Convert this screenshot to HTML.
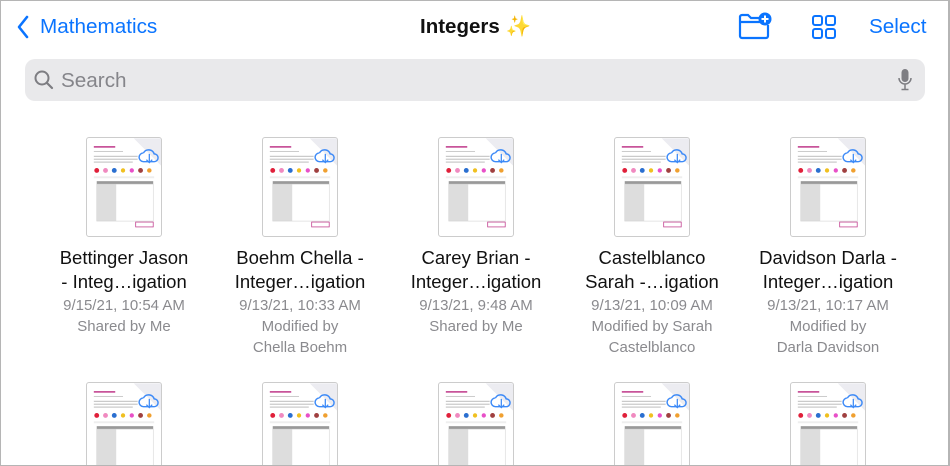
<!DOCTYPE html>
<html><head><meta charset="utf-8"><style>
*{margin:0;padding:0;box-sizing:border-box}
html,body{width:950px;height:466px;overflow:hidden}
body{background:#fff;font-family:"Liberation Sans",sans-serif;position:relative}
.frame{position:absolute;left:0;top:0;width:950px;height:466px;border:1px solid #b5b5b5;border-right-width:2px;pointer-events:none;z-index:5}
.blue{color:#0a74ff}
.abs{position:absolute}
.search{position:absolute;left:25px;top:59px;width:900px;height:42px;background:#e9e9eb;border-radius:10px}
.item{position:absolute;width:176px;text-align:center;white-space:nowrap}
.thumb{position:absolute;width:76px;height:100px;border:1px solid #ccc;border-radius:3px;background:#fff;overflow:hidden}
.t1{font-size:18.5px;line-height:24px;color:#111}
.t2{font-size:15px;line-height:21px;color:#8a8a8e}
</style></head><body>
<div class="frame"></div>
<svg class="abs" style="left:16px;top:15px" width="14" height="24" viewBox="0 0 14 24"><path d="M11 2 L3 12 L11 22" fill="none" stroke="#0a74ff" stroke-width="2.6" stroke-linecap="round" stroke-linejoin="round"/></svg>
<div class="abs blue" style="left:40px;top:15px;font-size:20.7px">Mathematics</div>
<div class="abs" style="left:420px;top:15px;font-size:20.5px;font-weight:bold;color:#111">Integers <span style="color:#f5c518">✨</span></div>
<svg class="abs" style="left:737px;top:12px" width="36" height="28" viewBox="0 0 36 28"><path d="M3 8 V24 a2 2 0 0 0 2 2 H29 a2 2 0 0 0 2 -2 V13 M3 10 V5 a2 2 0 0 1 2 -2 H11 L14 6 H22 M3 10 H24" fill="none" stroke="#0a74ff" stroke-width="2.2"/><circle cx="28" cy="7" r="6.5" fill="#0a74ff"/><path d="M28 3.5V10.5M24.5 7H31.5" stroke="#fff" stroke-width="2"/></svg>
<svg class="abs" style="left:811px;top:14px" width="26" height="26" viewBox="0 0 26 26"><g fill="none" stroke="#0a74ff" stroke-width="2"><rect x="2" y="2" width="9" height="9" rx="2"/><rect x="15" y="2" width="9" height="9" rx="2"/><rect x="2" y="15" width="9" height="9" rx="2"/><rect x="15" y="15" width="9" height="9" rx="2"/></g></svg>
<div class="abs blue" style="left:869px;top:15px;font-size:20.7px">Select</div>
<div class="search">
<svg class="abs" style="left:8px;top:10px" width="22" height="22" viewBox="0 0 22 22"><circle cx="9" cy="9" r="6.5" fill="none" stroke="#7d7d82" stroke-width="2"/><path d="M14 14 L19 19" stroke="#7d7d82" stroke-width="2.2" stroke-linecap="round"/></svg>
<div class="abs" style="left:36px;top:10px;font-size:20.7px;color:#85858a">Search</div>
<svg class="abs" style="left:872px;top:9px" width="16" height="24" viewBox="0 0 16 24"><rect x="4.5" y="1" width="7" height="13" rx="3.5" fill="#7d7d82"/><path d="M2 10 a6 6 0 0 0 12 0 M8 16 V21 M4.5 21.5 H11.5" fill="none" stroke="#7d7d82" stroke-width="1.5"/></svg>
</div>
<div id="g"></div>
<script>
var thumb='<svg width="74" height="98" viewBox="0 0 76 100"><path d="M48 0 L76 0 L76 28 Z" fill="#ececf1"/><path d="M58 15 a6 6 0 0 1 11 1 a4 4 0 0 1 0 8 H58 a4 4 0 0 1 0 -9" fill="none" stroke="#3d8af7" stroke-width="1.5"/><path d="M64 16 V25 M61 22 L64 25 L67 22" fill="none" stroke="#3d8af7" stroke-width="1.3"/><rect x="7" y="8" width="22" height="1.6" fill="#c2408f"/><rect x="7" y="13" width="30" height="0.8" fill="#bbb"/><rect x="7" y="18" width="45" height="0.8" fill="#aaa"/><rect x="7" y="21" width="45" height="0.8" fill="#aaa"/><rect x="7" y="24" width="40" height="0.8" fill="#aaa"/><circle cx="10" cy="33" r="2.5" fill="#e0203a"/><circle cx="19" cy="33" r="2.5" fill="#f08ac0"/><circle cx="28" cy="33" r="2.5" fill="#2a6fd0"/><circle cx="37" cy="33" r="2.2" fill="#f0c020"/><circle cx="46" cy="33" r="2.2" fill="#e850c8"/><circle cx="55" cy="33" r="2.5" fill="#a04040"/><circle cx="64" cy="33" r="2.3" fill="#f0a030"/><rect x="7" y="39" width="62" height="2" fill="#eee"/><rect x="10" y="44" width="58" height="3" fill="#999"/><rect x="10" y="47" width="20" height="38" fill="#ddd"/><rect x="10" y="47" width="58" height="38" fill="none" stroke="#ccc" stroke-width="0.5"/><rect x="50" y="86" width="18" height="5" fill="none" stroke="#c2408f" stroke-width="0.8"/></svg>';
var items=[["Bettinger Jason","- Integ…igation","9/15/21, 10:54 AM","Shared by Me",""],["Boehm Chella -","Integer…igation","9/13/21, 10:33 AM","Modified by","Chella Boehm"],["Carey Brian -","Integer…igation","9/13/21, 9:48 AM","Shared by Me",""],["Castelblanco","Sarah -…igation","9/13/21, 10:09 AM","Modified by Sarah","Castelblanco"],["Davidson Darla -","Integer…igation","9/13/21, 10:17 AM","Modified by","Darla Davidson"]];
var h='';
for(var i=0;i<5;i++){var cx=124+176*i;var it=items[i];
h+='<div class="thumb" style="left:'+(cx-38)+'px;top:137px">'+thumb+'</div>';
h+='<div class="thumb" style="left:'+(cx-38)+'px;top:382px">'+thumb+'</div>';
h+='<div class="item" style="left:'+(cx-88)+'px;top:246px"><div class="t1">'+it[0]+'</div><div class="t1">'+it[1]+'</div><div class="t2" style="margin-top:1px">'+it[2]+'</div><div class="t2">'+it[3]+'</div><div class="t2">'+it[4]+'</div></div>';}
document.getElementById('g').innerHTML=h;
</script>
</body></html>
